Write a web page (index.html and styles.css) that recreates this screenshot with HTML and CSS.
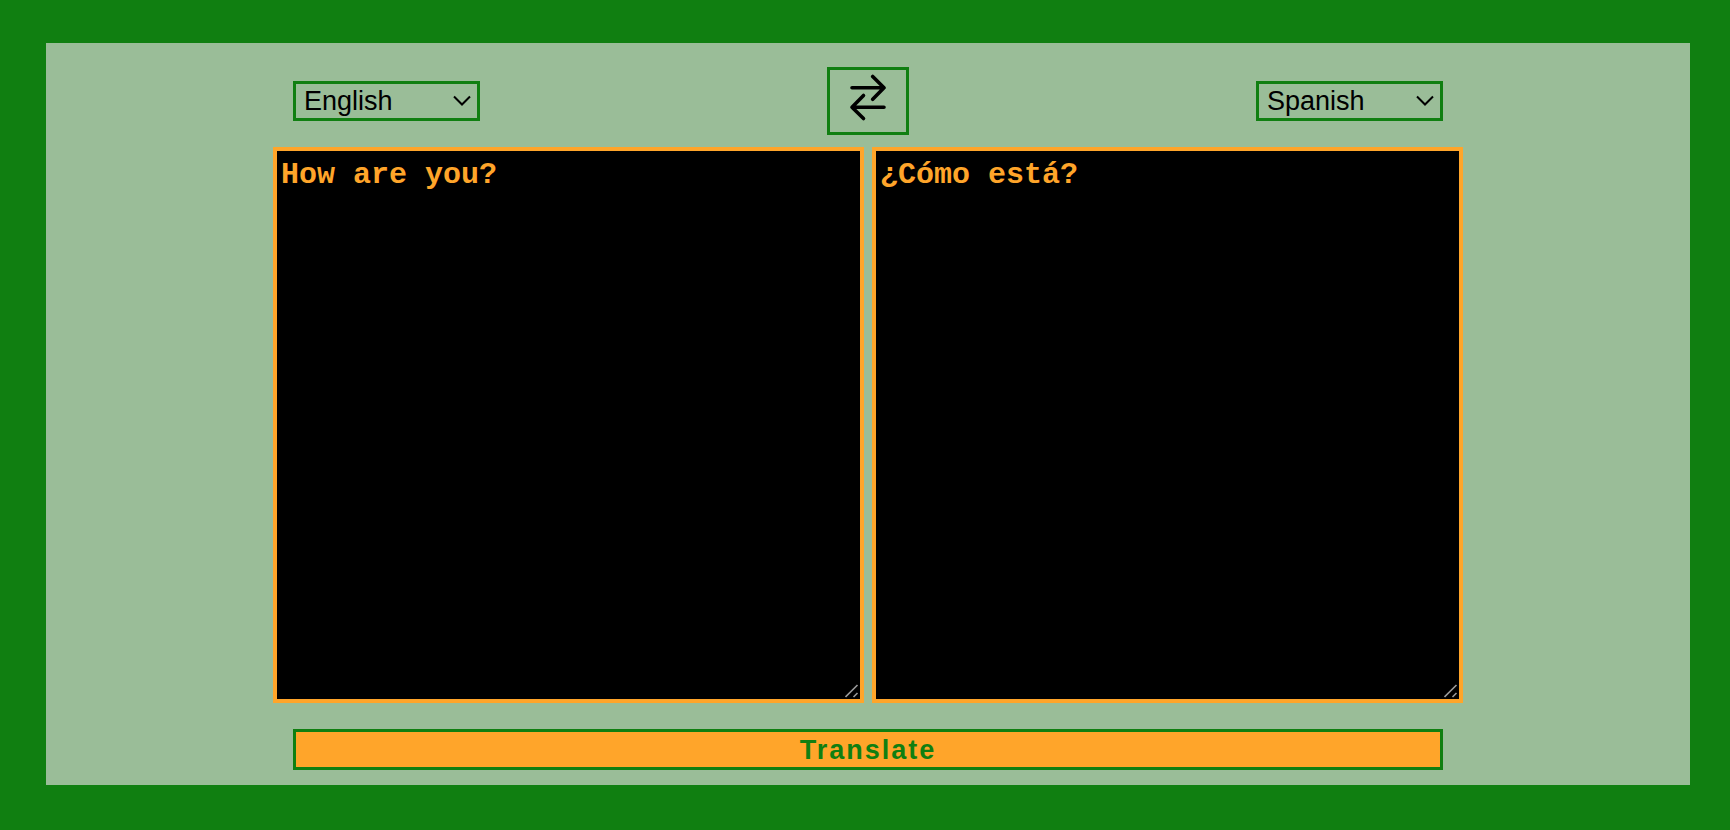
FILE: index.html
```html
<!DOCTYPE html>
<html lang="en">
<head>
  <meta charset="utf-8">
  <meta name="viewport" content="width=device-width, initial-scale=1">
  <title>Translate</title>
  <link rel="stylesheet" href="styles.css">
</head>
<body>
  <main class="panel">
    <form class="translator">
      <div class="toolbar">
        <div class="picker">
          <select class="picker-select" aria-label="Translate from">
            <option selected>English</option>
            <option>Spanish</option>
          </select>
          <svg class="picker-arrow" viewBox="0 0 18 12" aria-hidden="true">
            <path d="M1 1.5 9 9.5 17 1.5"/>
          </svg>
        </div>
        <button class="swap" type="button" aria-label="Swap languages">
          <svg class="swap-icon" viewBox="0 0 38 48" aria-hidden="true">
            <path d="M3 13.7H35M23.7 2.5 35 13.7 23.7 25.3"/>
            <path d="M35 33.2H3M14.5 21.5 3 33.2 14.5 44.5"/>
          </svg>
        </button>
        <div class="picker">
          <select class="picker-select" aria-label="Translate to">
            <option>English</option>
            <option selected>Spanish</option>
          </select>
          <svg class="picker-arrow" viewBox="0 0 18 12" aria-hidden="true">
            <path d="M1 1.5 9 9.5 17 1.5"/>
          </svg>
        </div>
      </div>
      <div class="texts">
        <textarea class="text" aria-label="Text to translate" spellcheck="false">How are you?</textarea>
        <textarea class="text" aria-label="Translation" spellcheck="false">¿Cómo está?</textarea>
      </div>
      <button class="submit" type="button">Translate</button>
    </form>
  </main>
</body>
</html>
```
FILE: styles.css
```css
* {
  box-sizing: border-box;
}

body {
  display: flex;
  min-height: 100vh;
  margin: 0;
  padding: 43px 40px 45px 46px;
  background: #107f11;
  font-family: Arial, "Liberation Sans", sans-serif;
}

.panel {
  display: flex;
  flex: 1;
  justify-content: center;
  padding: 24px 20px 15px;
  background: #9abd98;
}

.translator {
  display: flex;
  flex-direction: column;
  width: 100%;
  max-width: 1190px;
}

.toolbar {
  display: flex;
  align-items: center;
  justify-content: space-between;
  margin: 0 20px 12px;
}

.picker {
  position: relative;
}

.picker-select {
  appearance: none;
  display: block;
  width: 187px;
  height: 40px;
  padding: 0 32px 0 8px;
  border: 3px solid #107f11;
  border-radius: 0;
  background: transparent;
  color: #000;
  font: inherit;
  font-size: 27px;
}

.picker-arrow {
  position: absolute;
  top: 14px;
  right: 9px;
  width: 18px;
  height: 12px;
  fill: none;
  stroke: #000;
  stroke-width: 2;
  pointer-events: none;
}

.swap {
  display: flex;
  padding: 4px 19px 10px;
  border: 3px solid #107f11;
  background: transparent;
}

.swap-icon {
  width: 38px;
  height: 48px;
  fill: none;
  stroke: #000;
  stroke-width: 3.6;
  stroke-linecap: round;
  stroke-linejoin: round;
}

.texts {
  display: grid;
  flex: 1;
  grid-template-columns: 1fr 1fr;
  gap: 8px;
}

.text {
  width: 100%;
  min-height: 200px;
  margin: 0;
  padding: 7px 4px;
  border: 4px solid #ffa52a;
  background: #000;
  color: #ffa52a;
  font-family: "Courier New", "Liberation Mono", monospace;
  font-size: 30px;
  font-weight: bold;
}

.text::-webkit-resizer {
  background: url("data:image/svg+xml,%3Csvg xmlns='http://www.w3.org/2000/svg' viewBox='0 0 15 15'%3E%3Cpath d='M.5 13 12.5 1M8.5 13l4-4' fill='none' stroke='%23999' stroke-width='1.6'/%3E%3C/svg%3E") right bottom / 15px 15px no-repeat;
}

.submit {
  height: 41px;
  margin: 26px 20px 0;
  padding: 0;
  border: 3px solid #107f11;
  background: #ffa52a;
  color: #107f11;
  font: inherit;
  font-size: 27px;
  font-weight: bold;
  line-height: 32px;
  letter-spacing: 2px;
}
```
